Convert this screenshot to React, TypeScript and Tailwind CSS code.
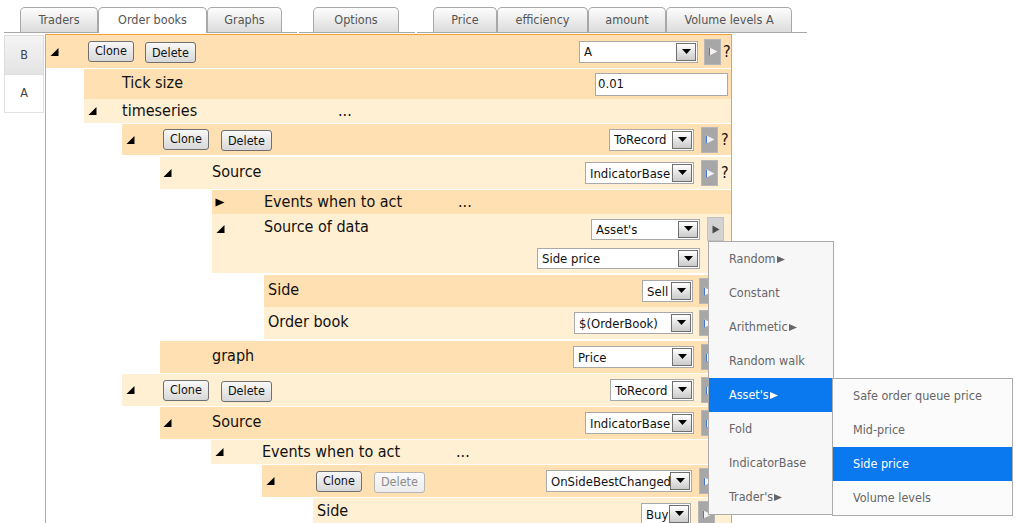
import React from "react";

const DARK = "bg-[#fee0b3]";
const LIGHT = "bg-[#ffefd3]";

function Tri({ dir = "down" }: { dir?: "down" | "right" }) {
  if (dir === "right") {
    return (
      <svg width="10" height="9" viewBox="0 0 10 9">
        <polygon points="0.5,0.5 9.5,4.5 0.5,8.5" fill="#000" />
      </svg>
    );
  }
  return (
    <svg width="9" height="8" viewBox="0 0 9 8">
      <polygon points="8.5,0 8.5,8 0.5,8" fill="#000" />
    </svg>
  );
}

function Btn({ children, disabled }: { children: React.ReactNode; disabled?: boolean }) {
  return (
    <button
      className={
        disabled
          ? "h-[21px] px-[6px] rounded-[3px] border border-[#b7b7b7] bg-linear-to-b from-[#fbfbfb] to-[#ececec] text-[12.5px] leading-none text-[#8c8c8c]"
          : "h-[21px] px-[6px] rounded-[3px] border border-[#707070] bg-linear-to-b from-[#f8f8f8] to-[#d8d8d8] text-[12.5px] leading-none text-[#111]"
      }
    >
      {children}
    </button>
  );
}

function Select({ value, w, h = "h-[22px]" }: { value: string; w: string; h?: string }) {
  return (
    <div className={`flex items-stretch bg-white border border-[#a9a9a9] pl-[4px] pr-[1px] py-[1px] ${w} ${h}`}>
      <span className="flex-1 flex items-center text-[13px] leading-none text-[#111] whitespace-nowrap overflow-hidden">
        {value}
      </span>
      <span className="w-[20px] flex items-center justify-center border border-[#6f6f6f] bg-linear-to-b from-white to-[#cbcbcb]">
        <svg width="9" height="5" viewBox="0 0 9 5" className="-mt-[1px]">
          <polygon points="0,0 9,0 4.5,5" fill="#000" />
        </svg>
      </span>
    </div>
  );
}

function Play({ light }: { light?: boolean }) {
  if (light) {
    return (
      <div className="w-[17px] h-[24px] bg-[#d2d2d2] border border-[#c2c2c2] flex items-center justify-center">
        <svg width="8" height="9" viewBox="0 0 8 9">
          <polygon points="0.5,0.5 7.5,4.5 0.5,8.5" fill="#4a4a4a" />
        </svg>
      </div>
    );
  }
  return (
    <div className="w-[17px] h-[26px] bg-[#a7a7a7] border border-[#b6b6b6] flex items-center justify-center">
      <svg width="10" height="9" viewBox="0 0 10 9">
        <polygon points="1.5,0.5 9.5,4.5 1.5,8.5" fill="#f5f1f5" />
        <line x1="1.5" y1="1" x2="1.5" y2="8.5" stroke="#3f76d8" strokeWidth="1" />
      </svg>
    </div>
  );
}

function Q({ w = "w-[13px] pl-[3px]" }: { w?: string }) {
  return <span className={`${w} text-[16px] leading-none text-[#111]`}>?</span>;
}

// tall rows sit their label a little above centre
function Label({ children, w = "", up }: { children: React.ReactNode; w?: string; up?: boolean }) {
  return (
    <span className={`${w} ${up ? "-mt-[3px]" : ""} text-[16px] leading-[18px] text-[#111] whitespace-nowrap`}>
      {children}
    </span>
  );
}

function Dots() {
  return <span className="text-[16px] leading-[18px] text-[#111]">...</span>;
}

function Tab({ label, w, active }: { label: string; w: string; active?: boolean }) {
  return (
    <div
      className={
        active
          ? `${w} h-[26px] -mb-px flex items-center justify-center rounded-t-[5px] border border-b-0 border-[#a8a8a8] bg-white text-[12.5px] text-[#555]`
          : `${w} h-[25px] flex items-center justify-center rounded-t-[5px] border border-b-0 border-[#a8a8a8] bg-linear-to-b from-[#fdfdfd] to-[#dcdcdc] text-[12.5px] text-[#555]`
      }
    >
      {label}
    </div>
  );
}

function Arrow() {
  return (
    <svg width="8" height="7" viewBox="0 0 8 7" className="inline-block ml-[1px]">
      <polygon points="0,0 8,3.5 0,7" fill="currentColor" />
    </svg>
  );
}

function MenuItem({ label, sub, active, pl }: { label: string; sub?: boolean; active?: boolean; pl: string }) {
  return (
    <div
      className={`h-[34px] flex items-center ${pl} text-[12.5px] ${
        active ? "bg-[#0a79f0] text-white" : "text-[#666]"
      }`}
    >
      <span>{label}</span>
      {sub && <Arrow />}
    </div>
  );
}

export default function App() {
  return (
    <div className="relative w-[1016px] h-[523px] overflow-hidden bg-white font-['DejaVu_Sans_Condensed','Liberation_Sans',sans-serif]">
      {/* tabs */}
      <div className="flex items-end h-[33px] gap-[2px]">
        <div className="ml-[4px] w-[293px] h-[33px] pl-[16px] flex items-end border-b border-[#a8a8a8]">
          <Tab label="Traders" w="w-[78px]" />
          <Tab label="Order books" w="w-[109px]" active />
          <Tab label="Graphs" w="w-[75px]" />
        </div>
        <div className="w-[116px] h-[33px] pl-[14px] flex items-end border-b border-[#a8a8a8]">
          <Tab label="Options" w="w-[86px]" />
        </div>
        <div className="w-[390px] h-[33px] pl-[16px] flex items-end border-b border-[#a8a8a8]">
          <Tab label="Price" w="w-[64px]" />
          <Tab label="efficiency" w="w-[91px]" />
          <Tab label="amount" w="w-[78px]" />
          <Tab label="Volume levels A" w="w-[126px]" />
        </div>
      </div>

      <div className="flex items-start">
        {/* side tabs */}
        <div className="ml-[4px] mt-[2px] w-[40px] flex flex-col text-[12.5px] text-[#444]">
          <div className="h-[40px] flex items-center justify-center border border-[#dcdcdc] bg-linear-to-b from-[#f4f4f4] to-[#e4e4e4]">
            B
          </div>
          <div className="h-[38px] flex items-center justify-center border border-t-0 border-[#e2e2e2] bg-white">
            A
          </div>
        </div>

        {/* tree panel */}
        <div className="ml-[1px] mt-[1px] w-[687px] border border-b-0 border-[#f3a03c] flex flex-col">
          {/* order book A */}
          <div className={`flex items-center h-[33px] ${DARK}`}>
            <div className="w-[42px] pl-[4px]"><Tri /></div>
            <Btn>Clone</Btn>
            <div className="ml-[11px]"><Btn>Delete</Btn></div>
            <div className="flex-1" />
            <Select value="A" w="w-[119px]" />
            <div className="ml-[6px]"><Play /></div>
            <Q w="w-[10px] pl-[2px]" />
          </div>

          <div className={`flex items-center mt-[1px] ml-[38px] h-[30px] ${DARK}`}>
            <div className="w-[38px]" />
            <Label up>Tick size</Label>
            <div className="flex-1" />
            <div className="w-[133px] h-[23px] mr-[3px] bg-white border border-[#a9a9a9] flex items-center pl-[2px] text-[13px] text-[#111]">
              0.01
            </div>
          </div>

          <div className={`flex items-center ml-[38px] h-[24px] ${LIGHT}`}>
            <div className="w-[38px] pl-[4px]"><Tri /></div>
            <Label w="w-[216px]">timeseries</Label>
            <Dots />
          </div>

          {/* first record */}
          <div className={`flex items-center mt-[1px] ml-[76px] h-[31px] ${DARK}`}>
            <div className="w-[41px] pl-[4px]"><Tri /></div>
            <Btn>Clone</Btn>
            <div className="ml-[12px]"><Btn>Delete</Btn></div>
            <div className="flex-1" />
            <Select value="ToRecord" w="w-[85px]" />
            <div className="ml-[7px]"><Play /></div>
            <Q />
          </div>

          <div className={`flex items-center mt-[2px] ml-[114px] h-[32px] ${LIGHT}`}>
            <div className="w-[52px] pl-[3px]"><Tri /></div>
            <Label up>Source</Label>
            <div className="flex-1" />
            <Select value="IndicatorBase" w="w-[109px]" />
            <div className="ml-[7px]"><Play /></div>
            <Q />
          </div>

          <div className={`flex items-center mt-[1px] ml-[166px] h-[24px] ${DARK}`}>
            <div className="w-[52px] pl-[3px]"><Tri dir="right" /></div>
            <Label w="w-[194px]">Events when to act</Label>
            <Dots />
          </div>

          <div className={`flex items-start ml-[166px] h-[59px] ${LIGHT}`}>
            <div className="w-[52px] pl-[4px] pt-[11px]"><Tri /></div>
            <div className="pt-[1px]"><Label>Source of data</Label></div>
            <div className="flex-1" />
            <div className="flex flex-col items-end pt-[3px] mr-[7px]">
              <div className="flex items-center">
                <Select value="Asset's" w="w-[109px]" h="h-[21px]" />
                <div className="ml-[7px]"><Play light /></div>
              </div>
              <div className="mt-[7px] mr-[24px]">
                <Select value="Side price" w="w-[163px]" h="h-[21px]" />
              </div>
            </div>
          </div>

          <div className={`flex items-center mt-[2px] ml-[218px] h-[32px] ${DARK}`}>
            <div className="w-[4px]" />
            <Label up>Side</Label>
            <div className="flex-1" />
            <Select value="Sell" w="w-[51px]" />
            <div className="ml-[6px]"><Play /></div>
            <Q w="w-[15px] pl-[3px]" />
          </div>

          <div className={`flex items-center ml-[218px] h-[32px] ${LIGHT}`}>
            <div className="w-[4px]" />
            <Label up>Order book</Label>
            <div className="flex-1" />
            <Select value="$(OrderBook)" w="w-[119px]" />
            <div className="ml-[6px]"><Play /></div>
            <Q w="w-[15px] pl-[3px]" />
          </div>

          <div className={`flex items-center mt-[2px] ml-[114px] h-[32px] ${DARK}`}>
            <div className="w-[52px]" />
            <Label up>graph</Label>
            <div className="flex-1" />
            <Select value="Price" w="w-[121px]" />
            <div className="ml-[7px]"><Play /></div>
            <Q />
          </div>

          {/* second record */}
          <div className={`flex items-center mt-[1px] ml-[76px] h-[32px] ${LIGHT}`}>
            <div className="w-[41px] pl-[4px]"><Tri /></div>
            <Btn>Clone</Btn>
            <div className="ml-[12px]"><Btn>Delete</Btn></div>
            <div className="flex-1" />
            <Select value="ToRecord" w="w-[84px]" />
            <div className="ml-[7px]"><Play /></div>
            <Q />
          </div>

          <div className={`flex items-center mt-[1px] ml-[114px] h-[32px] ${DARK}`}>
            <div className="w-[52px] pl-[3px]"><Tri /></div>
            <Label up>Source</Label>
            <div className="flex-1" />
            <Select value="IndicatorBase" w="w-[109px]" />
            <div className="ml-[7px]"><Play /></div>
            <Q />
          </div>

          <div className={`flex items-center mt-[1px] ml-[165px] h-[24px] ${LIGHT}`}>
            <div className="w-[51px] pl-[4px]"><Tri /></div>
            <Label w="w-[194px]">Events when to act</Label>
            <Dots />
          </div>

          <div className={`flex items-center mt-[1px] ml-[216px] h-[32px] ${DARK}`}>
            <div className="w-[54px] pl-[4px]"><Tri /></div>
            <Btn>Clone</Btn>
            <div className="ml-[12px]"><Btn disabled>Delete</Btn></div>
            <div className="flex-1" />
            <Select value="OnSideBestChanged" w="w-[146px]" />
            <div className="ml-[7px]"><Play /></div>
            <Q w="w-[15px] pl-[3px]" />
          </div>

          <div className={`flex items-start mt-[1px] ml-[267px] h-[34px] ${LIGHT}`}>
            <div className="w-[4px]" />
            <div className="pt-[1px]"><Label>Side</Label></div>
            <div className="flex-1" />
            <div className="pt-[5px]"><Select value="Buy" w="w-[50px]" /></div>
            <div className="ml-[7px] pt-[3px]"><Play /></div>
            <Q w="w-[16px] pl-[3px]" />
          </div>
        </div>
      </div>

      {/* context menu */}
      <div className="absolute left-[708px] top-[241px] w-[126px] border border-[#ababab] bg-[#f7f7f7] flex flex-col">
        <MenuItem label="Random" sub pl="pl-[20px]" />
        <MenuItem label="Constant" pl="pl-[20px]" />
        <MenuItem label="Arithmetic" sub pl="pl-[20px]" />
        <MenuItem label="Random walk" pl="pl-[20px]" />
        <MenuItem label="Asset's" sub active pl="pl-[20px]" />
        <MenuItem label="Fold" pl="pl-[20px]" />
        <MenuItem label="IndicatorBase" pl="pl-[20px]" />
        <MenuItem label="Trader's" sub pl="pl-[20px]" />
      </div>

      <div className="absolute left-[832px] top-[378px] w-[181px] border border-[#ababab] bg-[#fbfbfb] flex flex-col">
        <MenuItem label="Safe order queue price" pl="pl-[20px]" />
        <MenuItem label="Mid-price" pl="pl-[20px]" />
        <MenuItem label="Side price" active pl="pl-[20px]" />
        <MenuItem label="Volume levels" pl="pl-[20px]" />
      </div>
    </div>
  );
}
